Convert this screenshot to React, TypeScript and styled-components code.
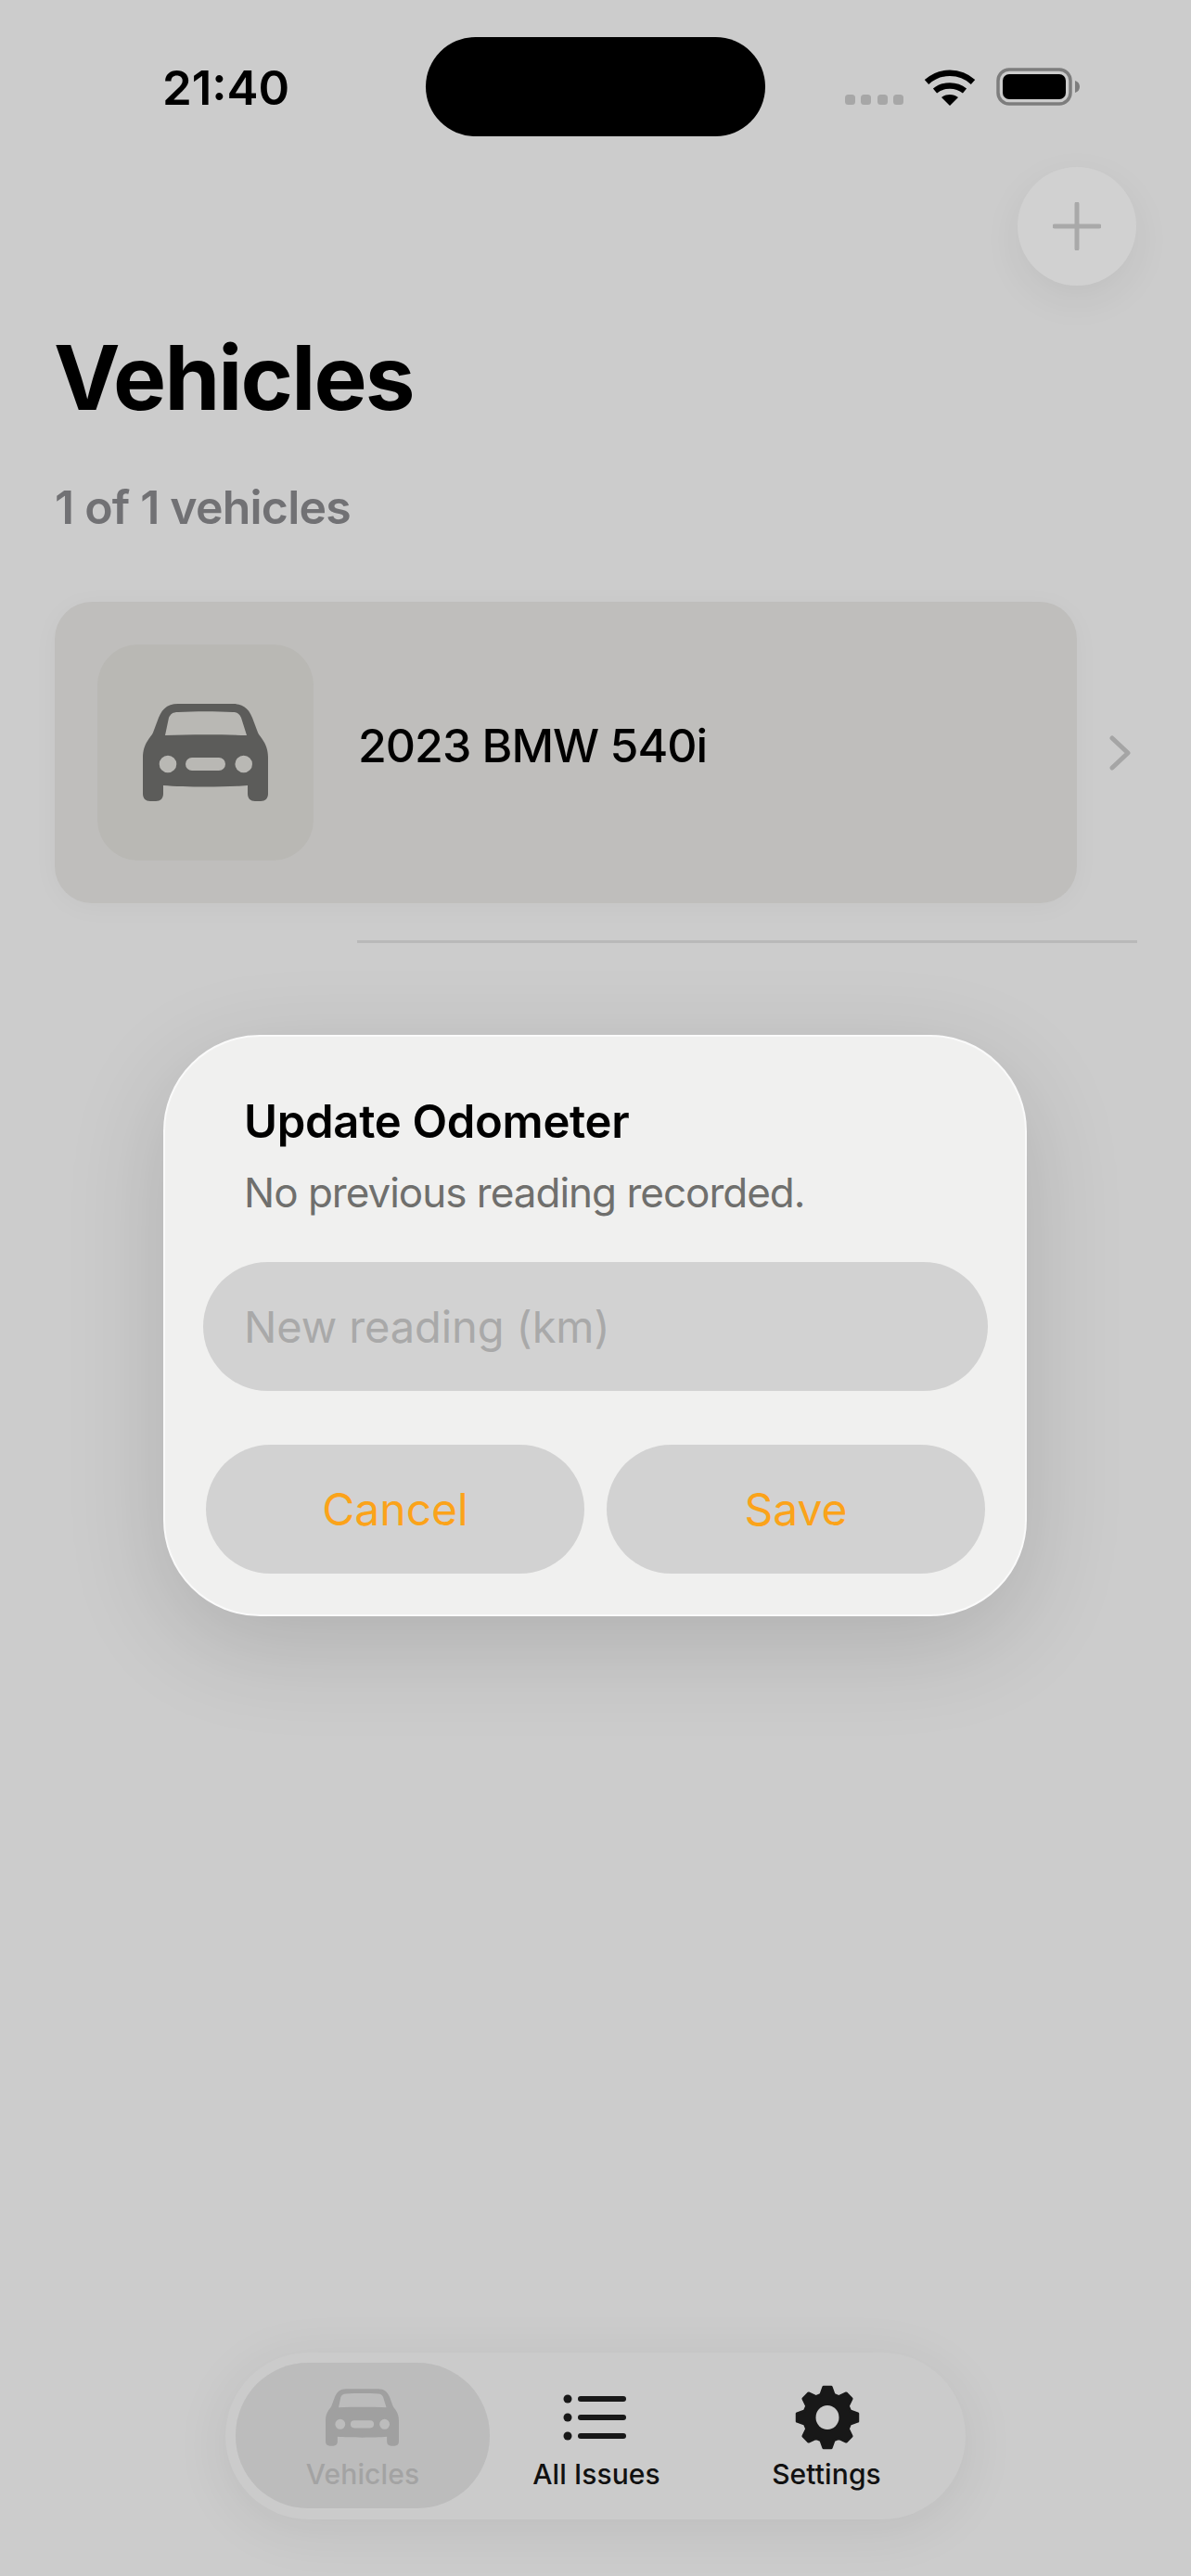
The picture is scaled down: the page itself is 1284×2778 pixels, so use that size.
import React from "react";
import styled, { createGlobalStyle } from "styled-components";

const Global = createGlobalStyle`
  html, body { margin: 0; padding: 0; background: #cccccc; }
  * { box-sizing: border-box; }
`;

const Page = styled.div`
  position: relative;
  width: 1284px;
  height: 2778px;
  overflow: hidden;
  padding: 0 58px 0 59px;
  background: #cccccc;
  color: #000;
  font-family: Inter, "Noto Sans", sans-serif;
`;

const StatusBar = styled.div`
  display: flex;
  align-items: flex-start;
  height: 147px;
  margin-right: -58px;
  padding: 40px 119px 0 116px;
`;
const Time = styled.div`
  width: 137px;
  margin-top: 25px;
  font-size: 51px;
  line-height: 60px;
  font-weight: 600;
  white-space: nowrap;
`;
const Island = styled.div`
  width: 366px;
  height: 107px;
  margin-left: 147px;
  border-radius: 54px;
  background: #000;
`;
const StatusIcons = styled.div`
  display: flex;
  align-items: flex-end;
  gap: 22px;
  margin-left: auto;
  margin-top: 33px;
`;
const Signal = styled.div`
  display: flex;
  gap: 6.5px;
  padding-bottom: 1px;
`;
const SignalDot = styled.span`
  width: 11px;
  height: 11px;
  border-radius: 3.5px;
  background: #a7a7a7;
`;
const Glyph = styled.svg`
  display: block;
  flex: none;
`;

const ActionRow = styled.div`
  display: flex;
  justify-content: flex-end;
  margin-top: 33px;
  padding-right: 1px;
`;
const AddButton = styled.div`
  display: flex;
  align-items: center;
  justify-content: center;
  width: 128px;
  height: 128px;
  border-radius: 50%;
  background: #d1d1d1;
  box-shadow: 0 14px 44px rgba(0, 0, 0, 0.06);
`;

const Title = styled.h1`
  margin: 41px 0 0 -1px;
  font-size: 96px;
  line-height: 116px;
  font-weight: 700;
  letter-spacing: -1.8px;
`;
const Subtitle = styled.div`
  margin-top: 52px;
  font-size: 50px;
  line-height: 60px;
  font-weight: 600;
  letter-spacing: -0.8px;
  color: #717174;
`;

const VehicleRow = styled.div`
  display: flex;
  align-items: center;
  margin-top: 72px;
`;
const Card = styled.div`
  display: flex;
  align-items: center;
  width: 1102px;
  height: 325px;
  padding-left: 46px;
  border-radius: 40px;
  background: #bfbebc;
  box-shadow: 0 4px 30px rgba(0, 0, 0, 0.03);
`;
const IconTile = styled.div`
  display: flex;
  align-items: center;
  justify-content: center;
  width: 233px;
  height: 233px;
  border-radius: 44px;
  background: #b9b8b4;
`;
const VehicleName = styled.div`
  margin-left: 48px;
  padding-bottom: 16px;
  font-size: 50px;
  line-height: 60px;
  font-weight: 500;
  letter-spacing: -1px;
`;
const ChevronSlot = styled.div`
  margin-left: 35px;
`;
const Divider = styled.div`
  height: 3px;
  margin: 40px 0 0 326px;
  background: #b9b9b9;
`;

const Dialog = styled.div`
  position: absolute;
  left: 176px;
  top: 1116px;
  width: 931px;
  height: 627px;
  padding: 62px 44px 0 42px;
  border: 2px solid #fafafa;
  border-radius: 104px;
  background: #f0f0ef;
  box-shadow: 0 30px 110px rgba(0, 0, 0, 0.14);
`;
const DialogTitle = styled.div`
  padding-left: 43px;
  font-size: 49px;
  line-height: 60px;
  font-weight: 600;
  letter-spacing: -0.3px;
`;
const DialogText = styled.div`
  margin-top: 19px;
  padding-left: 43px;
  font-size: 44px;
  line-height: 54px;
  letter-spacing: -1px;
  color: #6f6f6d;
`;
const ReadingInput = styled.input`
  display: block;
  width: 846px;
  height: 139px;
  margin: 48px 0 0 -1px;
  padding: 0 44px;
  border: none;
  outline: none;
  border-radius: 70px;
  background: #d2d2d2;
  font-family: inherit;
  font-size: 47px;
  letter-spacing: -0.1px;
  &::placeholder {
    color: #a9a9a9;
    opacity: 1;
  }
`;
const DialogActions = styled.div`
  display: grid;
  grid-template-columns: 408px 408px;
  gap: 24px;
  margin: 58px 0 0 2px;
`;
const DialogButton = styled.button`
  height: 139px;
  padding: 0;
  border: none;
  border-radius: 70px;
  background: #d2d2d2;
  color: #fba31a;
  font-family: inherit;
  font-size: 48px;
`;

const TabBar = styled.div`
  position: absolute;
  left: 243px;
  top: 2537px;
  display: grid;
  grid-template-columns: 274px 230px 266px;
  width: 798px;
  height: 180px;
  padding: 11px;
  border-radius: 90px;
  background: #cbcbcb;
  box-shadow: 0 10px 60px rgba(0, 0, 0, 0.08);
`;
const Tab = styled.div<{ $active?: boolean }>`
  display: flex;
  flex-direction: column;
  align-items: center;
  height: 157px;
  padding-top: 24px;
  border-radius: 78px;
  background: ${(p) => (p.$active ? "#bcbcbc" : "transparent")};
  color: ${(p) => (p.$active ? "#a3a3a3" : "#111")};
`;
const TabIcon = styled.div`
  display: flex;
  align-items: center;
  justify-content: center;
  height: 70px;
`;
const TabLabel = styled.div`
  margin-top: 8px;
  font-size: 30px;
  line-height: 36px;
  font-weight: 500;
  letter-spacing: 0.1px;
  white-space: nowrap;
`;

const CAR =
  "M38 0H97C108 0 114 5 118 15L124 31C126 36 135 42 135 58V97C135 102 132 105 127 105H121C116 105 113 102 113 97V88C90 90 45 90 22 88V97C22 102 19 105 14 105H8C3 105 0 102 0 97V58C0 42 9 36 11 31L17 15C21 5 27 0 38 0Z" +
  "M38 9C32 9 30 11 28 15L24 34C50 33 85 33 112 34L106 15C104 11 102 9 97 9C80 8 55 8 38 9Z" +
  "M27 55.7a9.3 9.3 0 1 0 0 18.6a9.3 9.3 0 1 0 0-18.6Z" +
  "M108.7 55.7a9.3 9.3 0 1 0 0 18.6a9.3 9.3 0 1 0 0-18.6Z" +
  "M53 58H82a7 7 0 0 1 0 14H53a7 7 0 0 1 0-14Z";

const CarTab = styled.div`
  margin-left: -2px;
`;

const Car = ({ width, height, color }: { width: number; height: number; color: string }) => (
  <Glyph width={width} height={height} viewBox="0 0 135 105">
    <path d={CAR} fill={color} fillRule="evenodd" />
  </Glyph>
);

const gearPath = () => {
  const teeth = 8;
  const pts: string[] = [];
  const outer = 33;
  const inner = 25.5;
  const step = (Math.PI * 2) / teeth;
  for (let i = 0; i < teeth; i++) {
    const a = i * step - Math.PI / 2;
    const seq: [number, number][] = [
      [inner, a - step * 0.36],
      [outer, a - step * 0.16],
      [outer, a + step * 0.16],
      [inner, a + step * 0.36],
    ];
    seq.forEach(([r, t]) => pts.push(`${(35 + r * Math.cos(t)).toFixed(2)} ${(35 + r * Math.sin(t)).toFixed(2)}`));
  }
  return `M${pts.join("L")}Z`;
};

const GearSlot = styled.div`
  margin-left: 1px;
`;

const Gear = () => (
  <Glyph width={70} height={70} viewBox="0 0 70 70">
    <path d={gearPath()} fill="#181818" stroke="#181818" strokeWidth={3} strokeLinejoin="round" />
    <ellipse cx={35} cy={35} rx={12.5} ry={13} fill="#cbcbcb" />
  </Glyph>
);

const ListSlot = styled.div`
  margin-left: -4px;
`;

const ListIcon = () => (
  <Glyph width={68} height={50} viewBox="0 0 68 50">
    {[5, 25, 45].map((y) => (
      <g key={y}>
        <circle cx={5} cy={y} r={4.5} fill="#181818" />
        <line x1={19} y1={y} x2={65} y2={y} stroke="#181818" strokeWidth={6} strokeLinecap="round" />
      </g>
    ))}
  </Glyph>
);

export default function App() {
  return (
    <Page>
      <Global />
      <StatusBar>
        <Time>21:40</Time>
        <Island />
        <StatusIcons>
          <Signal>
            <SignalDot />
            <SignalDot />
            <SignalDot />
            <SignalDot />
          </Signal>
          <Glyph width={56} height={41} viewBox="0 0 56 41">
            <path d="M3 15.5C17 2.5 39 2.5 53 15.5" fill="none" stroke="#000" strokeWidth={6.5} />
            <path d="M12 25C21 17.5 35 17.5 44 25" fill="none" stroke="#000" strokeWidth={6.5} />
            <path d="M19 32C24 28 32 28 37 32L28 41Z" fill="#000" />
          </Glyph>
          <Glyph width={91} height={41} viewBox="0 0 91 41">
            <rect x={2} y={2} width={78} height={37} rx={12} fill="none" stroke="#7d7d7d" strokeWidth={3.5} />
            <rect x={7} y={7} width={68} height={27} rx={7} fill="#000" />
            <path d="M85 14C88 15 90 17 90 20.5C90 24 88 26 85 27Z" fill="#7d7d7d" />
          </Glyph>
        </StatusIcons>
      </StatusBar>

      <ActionRow>
        <AddButton>
          <Glyph width={52} height={52} viewBox="0 0 52 52">
            <path d="M26 2V50M2 26H50" stroke="#a9a9a9" strokeWidth={5} strokeLinecap="round" />
          </Glyph>
        </AddButton>
      </ActionRow>

      <Title>Vehicles</Title>
      <Subtitle>1 of 1 vehicles</Subtitle>

      <VehicleRow>
        <Card>
          <IconTile>
            <Car width={135} height={105} color="#5c5c5a" />
          </IconTile>
          <VehicleName>2023 BMW 540i</VehicleName>
        </Card>
        <ChevronSlot>
          <Glyph width={24} height={38} viewBox="0 0 24 38">
            <path d="M3 3L20 19L3 35" fill="none" stroke="#a5a5a5" strokeWidth={5} strokeLinecap="round" strokeLinejoin="round" />
          </Glyph>
        </ChevronSlot>
      </VehicleRow>
      <Divider />

      <Dialog>
        <DialogTitle>Update Odometer</DialogTitle>
        <DialogText>No previous reading recorded.</DialogText>
        <ReadingInput placeholder="New reading (km)" readOnly />
        <DialogActions>
          <DialogButton>Cancel</DialogButton>
          <DialogButton>Save</DialogButton>
        </DialogActions>
      </Dialog>

      <TabBar>
        <Tab $active>
          <TabIcon>
            <CarTab>
              <Car width={79} height={62} color="#a0a0a0" />
            </CarTab>
          </TabIcon>
          <TabLabel>Vehicles</TabLabel>
        </Tab>
        <Tab>
          <TabIcon>
            <ListSlot>
              <ListIcon />
            </ListSlot>
          </TabIcon>
          <TabLabel>All Issues</TabLabel>
        </Tab>
        <Tab>
          <TabIcon>
            <GearSlot>
              <Gear />
            </GearSlot>
          </TabIcon>
          <TabLabel>Settings</TabLabel>
        </Tab>
      </TabBar>
    </Page>
  );
}
